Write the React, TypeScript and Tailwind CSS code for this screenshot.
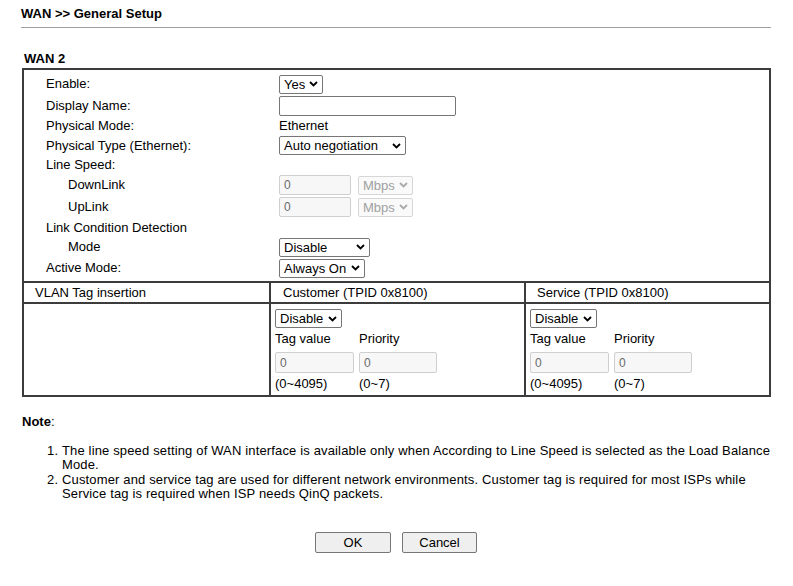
import React from "react";

const font = { fontFamily: '"Liberation Sans", Arial, sans-serif' };

function Chevron({ muted = false }: { muted?: boolean }) {
  return (
    <svg width="9" height="6" viewBox="0 0 9 6" className="shrink-0">
      <path d="M1 1 L4.5 4.5 L8 1" fill="none" stroke={muted ? "#aaaaaa" : "#000000"} strokeWidth="1.8" />
    </svg>
  );
}

function Select({ value, width, muted = false }: { value: string; width: number; muted?: boolean }) {
  return (
    <div
      className={`flex h-[19px] items-center justify-between rounded-[2px] border pl-[4px] pr-[4px] text-[13px] leading-none ${
        muted ? "border-[#d6d6d6] bg-[#fafafa] text-[#a0a0a0]" : "border-[#767676] bg-white text-black"
      }`}
      style={{ width }}
    >
      <span>{value}</span>
      <Chevron muted={muted} />
    </div>
  );
}

function Input({ value = "", width, disabled = false, height = 20 }: { value?: string; width: number; disabled?: boolean; height?: number }) {
  return (
    <div
      className={`flex items-center rounded-[2px] border px-[4px] text-[12px] ${
        disabled ? "border-[#cfcfcf] bg-[#f7f7f7] text-[#6a6a6a]" : "border-[#767676] bg-white text-black"
      }`}
      style={{ width, height }}
    >
      {value}
    </div>
  );
}

function Row({ label, h, indent = false, children }: { label: string; h: number; indent?: boolean; children?: React.ReactNode }) {
  return (
    <div className="flex items-center" style={{ height: h }}>
      <div className={`w-[233px] shrink-0 ${indent ? "pl-[22px]" : ""}`}>{label}</div>
      <div className="flex items-center gap-[7px]">{children}</div>
    </div>
  );
}

function TagCell() {
  return (
    <div className="px-[4px] pt-[5px]">
      <Select value="Disable" width={67} />
      <div className="mt-[2px] flex h-[18px] items-center">
        <span className="w-[84px]">Tag value</span>
        <span>Priority</span>
      </div>
      <div className="mt-[4px] flex gap-[5px]">
        <Input value="0" width={79} height={21} disabled />
        <Input value="0" width={78} height={21} disabled />
      </div>
      <div className="mt-[2px] flex h-[18px] items-center">
        <span className="w-[84px]">(0~4095)</span>
        <span>(0~7)</span>
      </div>
    </div>
  );
}

export default function App() {
  return (
    <div className="h-[586px] w-[793px] bg-white pl-[21px] pr-[22px] text-[13px] text-black" style={font}>
      <div className="flex h-[27px] items-center pt-[1px] text-[13px] font-bold">WAN &gt;&gt; General Setup</div>
      <div className="h-px bg-[#a0a0a0]" />

      <div className="mt-[22px] pl-[3px] text-[13px] font-bold leading-[18px]">WAN 2</div>

      <div className="ml-[1px] border-2 border-[#3c3c3c]">
        <div className="pb-[2px] pl-[22px] pt-[3px]">
          <Row label="Enable:" h={22}>
            <Select value="Yes" width={44} />
          </Row>
          <Row label="Display Name:" h={21}>
            <Input width={177} />
          </Row>
          <Row label="Physical Mode:" h={20}>
            <span>Ethernet</span>
          </Row>
          <Row label="Physical Type (Ethernet):" h={19}>
            <Select value="Auto negotiation" width={127} />
          </Row>
          <Row label="Line Speed:" h={19} />
          <Row label="DownLink" h={22} indent>
            <Input value="0" width={72} disabled />
            <Select value="Mbps" width={55} muted />
          </Row>
          <Row label="UpLink" h={22} indent>
            <Input value="0" width={72} disabled />
            <Select value="Mbps" width={55} muted />
          </Row>
          <Row label="Link Condition Detection" h={19} />
          <Row label="Mode" h={20} indent>
            <Select value="Disable" width={91} />
          </Row>
          <Row label="Active Mode:" h={22}>
            <Select value="Always On" width={86} />
          </Row>
        </div>

        <div className="grid grid-cols-[245px_2px_253px_2px_244px] border-t-2 border-[#3c3c3c]">
          <div className="flex h-[19px] items-center pl-[11px]">VLAN Tag insertion</div>
          <div className="bg-[#3c3c3c]" />
          <div className="flex h-[19px] items-center pl-[12px]">Customer (TPID 0x8100)</div>
          <div className="bg-[#3c3c3c]" />
          <div className="flex h-[19px] items-center pl-[11px]">Service (TPID 0x8100)</div>

          <div className="col-span-5 h-[2px] bg-[#3c3c3c]" />

          <div className="h-[91px]" />
          <div className="bg-[#3c3c3c]" />
          <TagCell />
          <div className="bg-[#3c3c3c]" />
          <TagCell />
        </div>
      </div>

      <div className="mt-[15px] pl-[1px]">
        <span className="font-bold">Note</span>:
      </div>
      <ol className="mt-[12px] list-decimal pl-[41px] leading-[14.5px] tracking-[0.15px]">
        <li>
          The line speed setting of WAN interface is available only when According to Line Speed is selected as the Load Balance Mode.
        </li>
        <li>
          Customer and service tag are used for different network environments. Customer tag is required for most ISPs while Service tag is required when ISP needs QinQ packets.
        </li>
      </ol>

      <div className="mt-[30px] flex justify-center gap-[11px]">
        <button className="h-[21px] w-[76px] rounded-[2px] border border-[#767676] bg-[#efefef] text-[13px]">OK</button>
        <button className="h-[21px] w-[75px] rounded-[2px] border border-[#767676] bg-[#efefef] text-[13px]">Cancel</button>
      </div>
    </div>
  );
}
